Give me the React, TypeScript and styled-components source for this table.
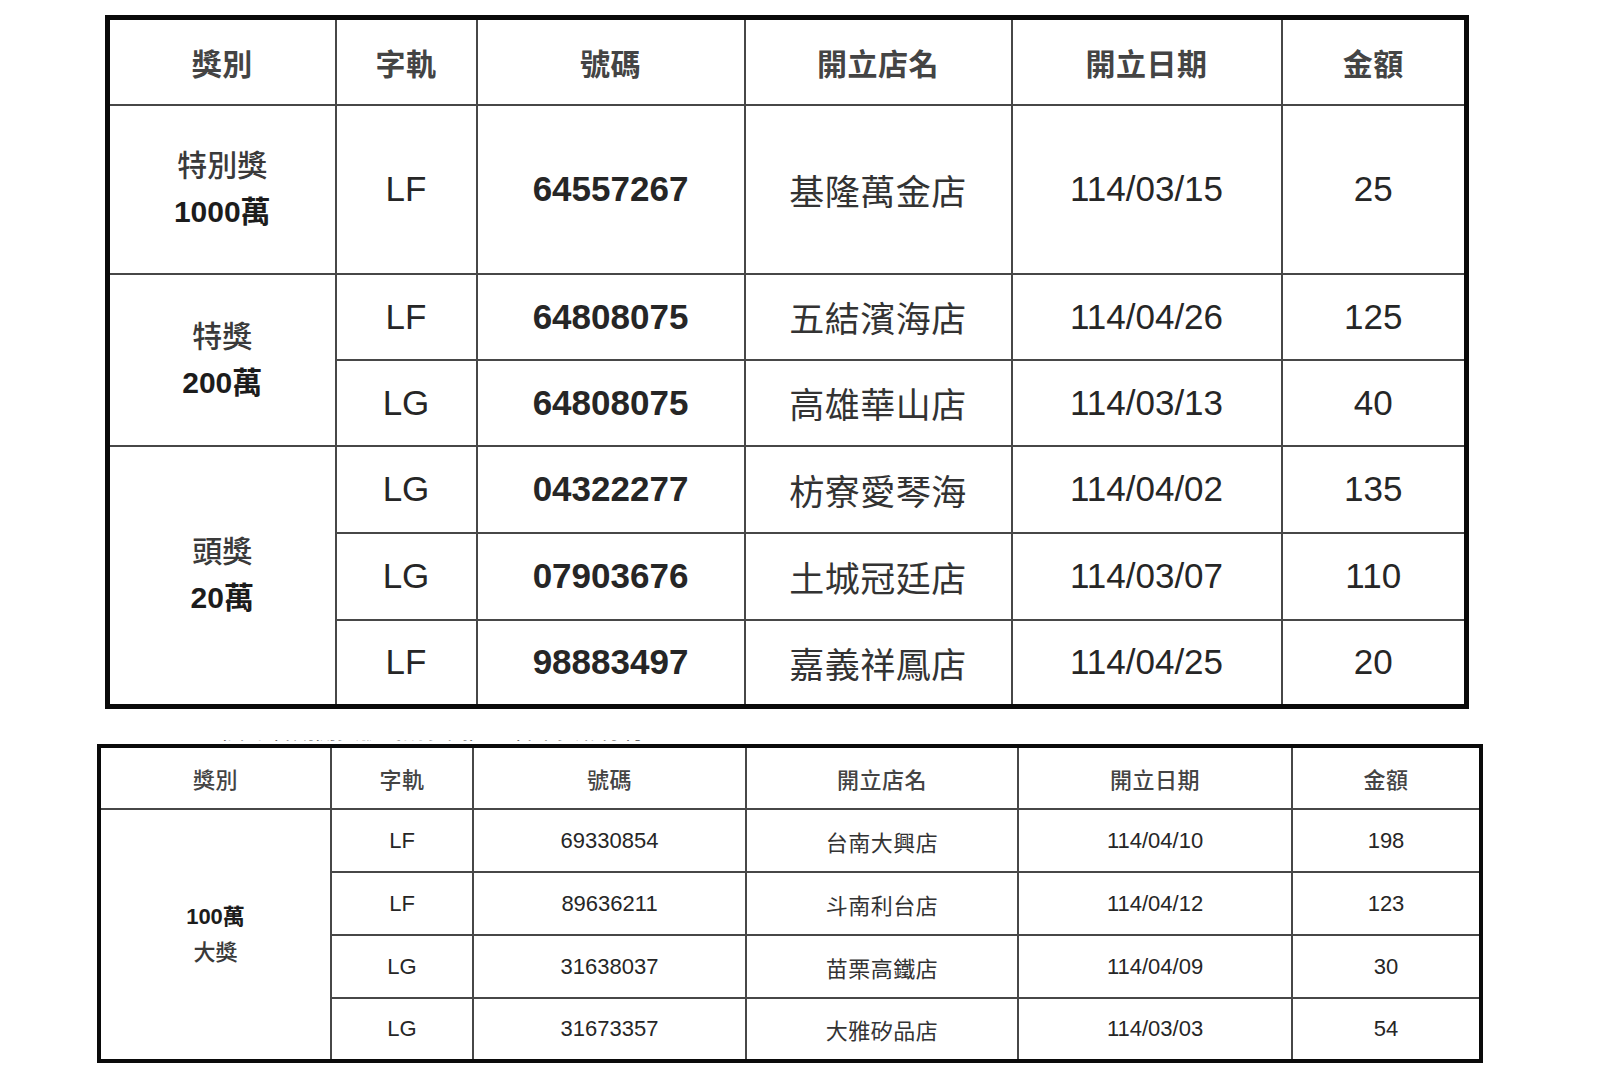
import { Fragment } from "react";
import styled, { createGlobalStyle } from "styled-components";

type Row = { track: string; num: string; store: string; date: string; amount: string };
type Group = { label: { text: string; bold?: boolean }[]; rows: Row[]; rowHeight: number };

const headers = ["獎別", "字軌", "號碼", "開立店名", "開立日期", "金額"];

const bigPrizes: Group[] = [
	{
		label: [{ text: "特別獎" }, { text: "1000萬", bold: true }],
		rowHeight: 169,
		rows: [{ track: "LF", num: "64557267", store: "基隆萬金店", date: "114/03/15", amount: "25" }],
	},
	{
		label: [{ text: "特獎" }, { text: "200萬", bold: true }],
		rowHeight: 86,
		rows: [
			{ track: "LF", num: "64808075", store: "五結濱海店", date: "114/04/26", amount: "125" },
			{ track: "LG", num: "64808075", store: "高雄華山店", date: "114/03/13", amount: "40" },
		],
	},
	{
		label: [{ text: "頭獎" }, { text: "20萬", bold: true }],
		rowHeight: 87,
		rows: [
			{ track: "LG", num: "04322277", store: "枋寮愛琴海", date: "114/04/02", amount: "135" },
			{ track: "LG", num: "07903676", store: "土城冠廷店", date: "114/03/07", amount: "110" },
			{ track: "LF", num: "98883497", store: "嘉義祥鳳店", date: "114/04/25", amount: "20" },
		],
	},
];

const millionPrizes: Group[] = [
	{
		label: [{ text: "100萬", bold: true }, { text: "大獎" }],
		rowHeight: 63,
		rows: [
			{ track: "LF", num: "69330854", store: "台南大興店", date: "114/04/10", amount: "198" },
			{ track: "LF", num: "89636211", store: "斗南利台店", date: "114/04/12", amount: "123" },
			{ track: "LG", num: "31638037", store: "苗栗高鐵店", date: "114/04/09", amount: "30" },
			{ track: "LG", num: "31673357", store: "大雅矽品店", date: "114/03/03", amount: "54" },
		],
	},
];

const GlobalStyle = createGlobalStyle`
	html, body {
		margin: 0;
		background: #fff;
	}
	body {
		font-family: "Liberation Sans", "Noto Sans CJK TC", sans-serif;
		color: #222;
	}
`;

const Page = styled.div`
	display: flex;
	flex-direction: column;
	align-items: flex-start;
	padding: 15px 0 0 0;
	width: 1600px;
`;

const Sheet = styled.table<{ $edge: number; $line: number; $left: number; $width: number }>`
	border-collapse: collapse;
	table-layout: fixed;
	width: ${p => p.$width}px;
	margin-left: ${p => p.$left}px;
	border: ${p => p.$edge}px solid #0a0a0a;
	th,
	td {
		border: ${p => p.$line}px solid #474747;
		padding: 0;
		text-align: center;
		vertical-align: middle;
	}
`;

const HeadRow = styled.tr<{ $height: number }>`
	height: ${p => p.$height}px;
`;

const BodyRow = styled.tr<{ $height: number }>`
	height: ${p => p.$height}px;
`;

const Head = styled.th<{ $size: number; $weight: number }>`
	font-family: "Liberation Serif", "Noto Sans CJK TC", serif;
	font-size: ${p => p.$size}px;
	font-weight: ${p => p.$weight};
	color: #444;
	letter-spacing: 0.5px;
`;

const Label = styled.td<{ $size: number; $gap: number }>`
	font-size: ${p => p.$size}px;
	line-height: ${p => p.$gap}px;
	color: #2a2a2a;
`;

const LabelLine = styled.div<{ $bold?: boolean }>`
	font-weight: ${p => (p.$bold ? 700 : 500)};
	color: ${p => (p.$bold ? "#1c1c1c" : "#3a3a3a")};
`;

const Cell = styled.td<{ $size: number; $bold?: boolean }>`
	font-family: "Liberation Sans", sans-serif;
	font-size: ${p => p.$size}px;
	font-weight: ${p => (p.$bold ? 700 : 400)};
	color: #262626;
`;

const Store = styled.td<{ $size: number }>`
	font-family: "Liberation Serif", "Noto Sans CJK TC", serif;
	font-size: ${p => p.$size}px;
	color: #333;
	letter-spacing: 0.5px;
`;

const CutNote = styled.div`
	display: flex;
	align-items: flex-end;
	height: 4px;
	overflow: hidden;
	margin: 31px 0 0 150px;
	font-family: "Liberation Serif", "Noto Sans CJK TC", serif;
	font-size: 22px;
	line-height: 26px;
	color: #444;
	white-space: pre;
`;

type Spec = {
	edge: number;
	line: number;
	left: number;
	width: number;
	cols: number[];
	headHeight: number;
	headSize: number;
	headWeight: number;
	labelSize: number;
	labelGap: number;
	textSize: number;
	storeSize: number;
	boldNumbers: boolean;
};

const PrizeTable = ({ spec, groups }: { spec: Spec; groups: Group[] }) => (
	<Sheet $edge={spec.edge} $line={spec.line} $left={spec.left} $width={spec.width}>
		<colgroup>
			{spec.cols.map((w, i) => (
				<col key={i} style={{ width: w }} />
			))}
		</colgroup>
		<thead>
			<HeadRow $height={spec.headHeight}>
				{headers.map(h => (
					<Head key={h} $size={spec.headSize} $weight={spec.headWeight}>
						{h}
					</Head>
				))}
			</HeadRow>
		</thead>
		<tbody>
			{groups.map((g, gi) => (
				<Fragment key={gi}>
					{g.rows.map((r, ri) => (
						<BodyRow key={ri} $height={g.rowHeight}>
							{ri === 0 && (
								<Label rowSpan={g.rows.length} $size={spec.labelSize} $gap={spec.labelGap}>
									{g.label.map(l => (
										<LabelLine key={l.text} $bold={l.bold}>
											{l.text}
										</LabelLine>
									))}
								</Label>
							)}
							<Cell $size={spec.textSize}>{r.track}</Cell>
							<Cell $size={spec.textSize} $bold={spec.boldNumbers}>
								{r.num}
							</Cell>
							<Store $size={spec.storeSize}>{r.store}</Store>
							<Cell $size={spec.textSize}>{r.date}</Cell>
							<Cell $size={spec.textSize}>{r.amount}</Cell>
						</BodyRow>
					))}
				</Fragment>
			))}
		</tbody>
	</Sheet>
);

const bigSpec: Spec = {
	edge: 5,
	line: 2,
	left: 105,
	width: 1359,
	cols: [228, 141, 268, 267, 270, 185],
	headHeight: 87,
	headSize: 30,
	headWeight: 700,
	labelSize: 30,
	labelGap: 46,
	textSize: 35,
	storeSize: 35,
	boldNumbers: true,
};

const smallSpec: Spec = {
	edge: 4,
	line: 2,
	left: 97,
	width: 1382,
	cols: [232, 142, 273, 272, 274, 189],
	headHeight: 63,
	headSize: 22,
	headWeight: 500,
	labelSize: 22,
	labelGap: 36,
	textSize: 22,
	storeSize: 22,
	boldNumbers: false,
};

const App = () => (
	<>
		<GlobalStyle />
		<Page>
			<PrizeTable spec={bigSpec} groups={bigPrizes} />
			<CutNote>{"一、  （詳細各期開獎號碼請參閱）    各中獎彩券行 "}</CutNote>
			<PrizeTable spec={smallSpec} groups={millionPrizes} />
		</Page>
	</>
);

export default App;
